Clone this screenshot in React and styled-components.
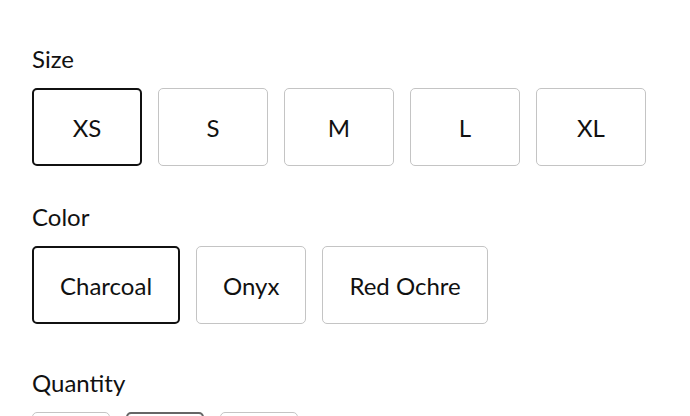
import React from 'react'
import styled, { createGlobalStyle } from 'styled-components'

const Global = createGlobalStyle`
  body {
    margin: 0;
    background: #fff;
    font-family: Lato, "Open Sans", sans-serif;
    color: #111;
  }
`

const Page = styled.div`
  padding: 44px 32px 0;
  height: 416px;
  box-sizing: border-box;
  overflow: hidden;
`

const Group = styled.section`
  margin-bottom: ${p => p.$gap || 36}px;
`

const Label = styled.h3`
  margin: 0 0 14px;
  font-size: 24px;
  font-weight: 400;
  line-height: 30px;
`

const Options = styled.div`
  display: flex;
  gap: 16px;
`

const Option = styled.button`
  min-width: 110px;
  height: 78px;
  padding: 0 26px;
  box-sizing: border-box;
  background: #fff;
  border: ${p => (p.$selected ? '2px solid #111' : '1px solid #c4c4c4')};
  border-radius: 5px;
  font-family: inherit;
  font-size: 24px;
  color: #111;
  cursor: pointer;
`

const QtyBox = styled.div`
  width: 78px;
  height: 40px;
  box-sizing: border-box;
  border: ${p => (p.$dark ? '2px solid #666' : '1px solid #c4c4c4')};
  border-radius: 5px;
`

const sizes = ['XS', 'S', 'M', 'L', 'XL']
const colors = ['Charcoal', 'Onyx', 'Red Ochre']

export default function App() {
  return (
    <Page>
      <Global />
      <Group>
        <Label>Size</Label>
        <Options>
          {sizes.map(s => (
            <Option key={s} $selected={s === 'XS'}>{s}</Option>
          ))}
        </Options>
      </Group>
      <Group $gap={44}>
        <Label>Color</Label>
        <Options>
          {colors.map(c => (
            <Option key={c} $selected={c === 'Charcoal'}>{c}</Option>
          ))}
        </Options>
      </Group>
      <Group>
        <Label>Quantity</Label>
        <Options>
          <QtyBox />
          <QtyBox $dark />
          <QtyBox />
        </Options>
      </Group>
    </Page>
  )
}
